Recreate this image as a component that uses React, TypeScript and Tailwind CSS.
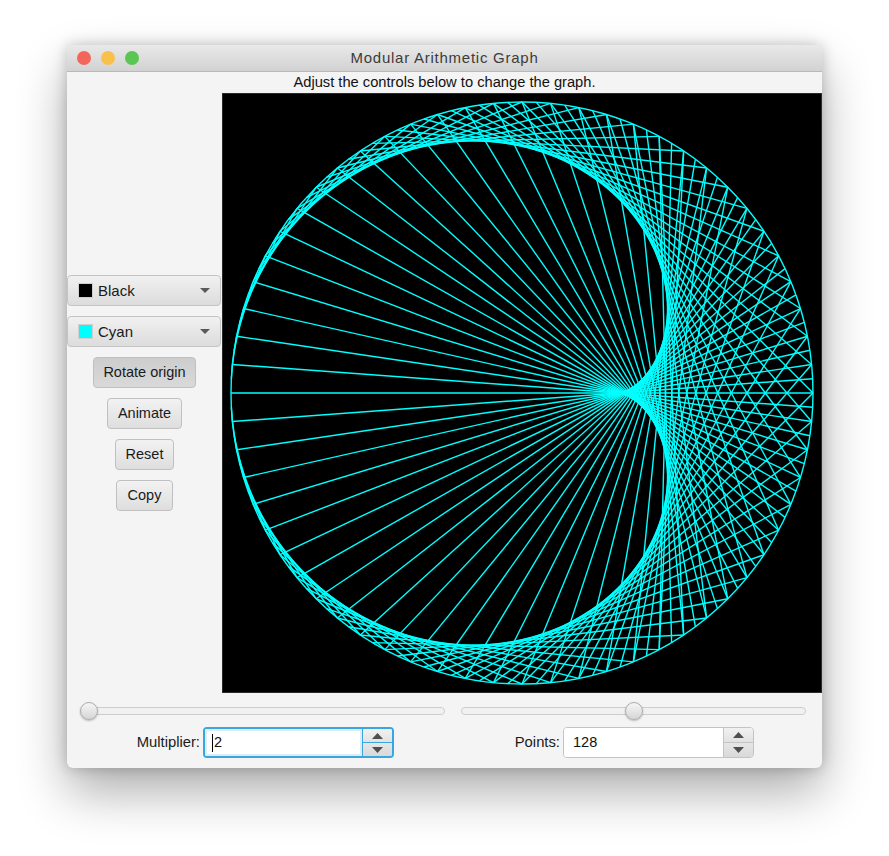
const POINTS = 128;
const MULTIPLIER = 2;
const CX = 300;
const CY = 300;
const R = 291;

function pt(i: number) {
  const a = Math.PI + (2 * Math.PI * i) / POINTS;
  return { x: CX + R * Math.cos(a), y: CY + R * Math.sin(a) };
}

function Graph() {
  const lines = [];
  for (let i = 0; i < POINTS; i++) {
    const a = pt(i);
    const b = pt((i * MULTIPLIER) % POINTS);
    lines.push(<line key={i} x1={a.x} y1={a.y} x2={b.x} y2={b.y} stroke="#00ffff" strokeWidth={1.4} />);
  }
  return (
    <svg width={600} height={600} viewBox="0 0 600 600" className="block bg-black">
      <rect x={0.5} y={0.5} width={599} height={599} fill="none" stroke="#2b2b2b" />
      <circle cx={CX} cy={CY} r={R} fill="none" stroke="#00ffff" strokeWidth={1.4} />
      {lines}
    </svg>
  );
}

function Combo({ color, label }: { color: string; label: string }) {
  return (
    <div className="flex h-[31px] w-[154px] items-center rounded-[4px] border border-[#c4c4c4] bg-gradient-to-b from-[#f1f1f1] to-[#dcdcdc] pl-[10px] pr-[9px]">
      <span className="mr-[5px] h-[15px] w-[15px] border border-[#cfcfcf]" style={{ background: color }} />
      <span className="text-[15px] leading-none text-[#1a1a1a]">{label}</span>
      <svg width="10" height="5" viewBox="0 0 10 5" className="ml-auto mr-[1px]">
        <polygon points="0,0 10,0 5,5" fill="#5a5a5a" />
      </svg>
    </div>
  );
}

function Btn({ label, w, pressed }: { label: string; w: string; pressed?: boolean }) {
  return (
    <div
      className={
        "flex h-[31px] items-center justify-center rounded-[4px] border border-[#c0c0c0] bg-gradient-to-b text-[14.5px] text-[#1a1a1a] " +
        w +
        (pressed ? " from-[#cdcdcd] to-[#d9d9d9]" : " from-[#f2f2f2] to-[#dedede]")
      }
    >
      {label}
    </div>
  );
}

function Slider({ w, thumb }: { w: string; thumb: string }) {
  return (
    <div className={"relative h-[8px] rounded-full border border-[#cdcdcd] bg-[#f1f1f1] " + w}>
      <span
        className={
          "absolute top-[-6px] h-[18px] w-[18px] rounded-full border border-[#adadad] bg-gradient-to-b from-[#f6f6f6] to-[#d6d6d6] shadow-[0_1px_2px_rgba(0,0,0,0.25)] " +
          thumb
        }
      />
    </div>
  );
}

function Spinner({ value, focused }: { value: string; focused?: boolean }) {
  return (
    <div
      className={
        "flex h-[31px] w-[191px] overflow-hidden rounded-[4px] " +
        (focused ? "border-[2px] border-[#3aa6de]" : "border border-[#c4c4c4]")
      }
    >
      <div
        className={
          "flex flex-1 items-center bg-white text-[14.5px] text-[#111] " +
          (focused ? "border-[2px] border-[#dcedf7] pl-[5px]" : "pl-[9px]")
        }
      >
        {focused && <span className="mr-px h-[18px] w-px bg-black" />}
        {value}
      </div>
      <div className={"flex w-[30px] flex-col border-l " + (focused ? "border-[#3aa6de]" : "border-[#c4c4c4]")}>
        <div className="flex flex-1 items-center justify-center bg-gradient-to-b from-[#f1f1f1] to-[#e2e2e2]">
          <svg width="11" height="6" viewBox="0 0 11 6">
            <polygon points="0,6 11,6 5.5,0" fill="#4f4f4f" />
          </svg>
        </div>
        <div
          className={
            "flex flex-1 items-center justify-center border-t bg-gradient-to-b from-[#e6e6e6] to-[#d9d9d9] " +
            (focused ? "border-[#3aa6de]" : "border-[#c4c4c4]")
          }
        >
          <svg width="11" height="6" viewBox="0 0 11 6">
            <polygon points="0,0 11,0 5.5,6" fill="#4f4f4f" />
          </svg>
        </div>
      </div>
    </div>
  );
}

export default function App() {
  return (
    <div className="h-[856px] w-[889px] overflow-hidden bg-white pl-[67px] pt-[45px] font-['Liberation_Sans',Arial,sans-serif]">
      <div className="flex h-[723px] w-[755px] flex-col overflow-hidden rounded-[6px] bg-[#f4f4f4] shadow-[0_24px_50px_rgba(0,0,0,0.32),0_0_14px_rgba(0,0,0,0.22)]">
        {/* title bar */}
        <div className="relative flex h-[27px] shrink-0 items-center justify-center border-b border-[#b9b9b9] bg-gradient-to-b from-[#e9e9e9] to-[#d2d2d2]">
          <div className="absolute left-[10px] top-[6px] flex gap-[10px]">
            <span className="h-[14px] w-[14px] rounded-full bg-[#f4665c]" />
            <span className="h-[14px] w-[14px] rounded-full bg-[#fac04c]" />
            <span className="h-[14px] w-[14px] rounded-full bg-[#5cc653]" />
          </div>
          <span className="text-[15px] tracking-[0.75px] text-[#3c3c3c]">Modular Arithmetic Graph</span>
        </div>

        <div className="flex h-[21px] shrink-0 items-center justify-center text-[14.7px] text-[#111]">
          Adjust the controls below to change the graph.
        </div>

        <div className="flex h-[600px] shrink-0">
          <div className="flex w-[155px] flex-col items-start justify-center gap-[10px]">
            <Combo color="#000000" label="Black" />
            <Combo color="#00ffff" label="Cyan" />
            <div className="flex w-[155px] flex-col items-center gap-[10px]">
              <Btn label="Rotate origin" w="w-[103px]" pressed />
              <Btn label="Animate" w="w-[75px]" />
              <Btn label="Reset" w="w-[59px]" />
              <Btn label="Copy" w="w-[57px]" />
            </div>
          </div>
          <Graph />
        </div>

        <div className="flex flex-1 flex-col pt-[14px]">
          <div className="flex gap-[16px] pl-[13px]">
            <Slider w="w-[365px]" thumb="left-[-1px]" />
            <Slider w="w-[345px]" thumb="left-[163px]" />
          </div>
          <div className="mt-[12px] flex">
            <div className="flex w-[327px] items-center justify-end gap-[3px] text-[14.8px] text-[#1a1a1a]">
              Multiplier:
              <Spinner value="2" focused />
            </div>
            <div className="flex w-[360px] items-center justify-end gap-[3px] text-[14.8px] text-[#1a1a1a]">
              Points:
              <Spinner value="128" />
            </div>
          </div>
        </div>
      </div>
    </div>
  );
}
